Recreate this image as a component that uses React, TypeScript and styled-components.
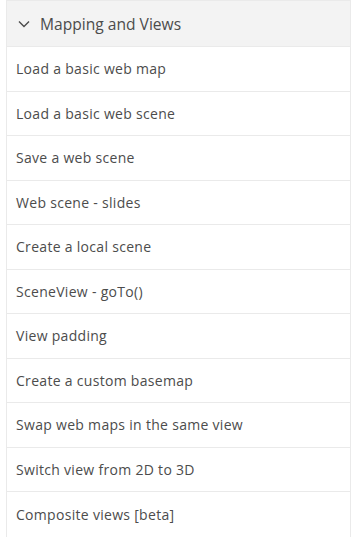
import { FC } from "react";
import styled, { createGlobalStyle } from "styled-components";

const GlobalStyle = createGlobalStyle`
  body {
    margin: 0;
    background: #ffffff;
    font-family: "Open Sans", Lato, sans-serif;
  }
`;

const items = [
  "Load a basic web map",
  "Load a basic web scene",
  "Save a web scene",
  "Web scene - slides",
  "Create a local scene",
  "SceneView - goTo()",
  "View padding",
  "Create a custom basemap",
  "Swap web maps in the same view",
  "Switch view from 2D to 3D",
  "Composite views [beta]",
];

const Panel = styled.section`
  margin-left: 6px;
  width: 345px;
  border: 1px solid #eaeaea;
  box-sizing: border-box;
`;

const Header = styled.div`
  display: flex;
  align-items: center;
  gap: 9px;
  height: 46px;
  padding-left: 10px;
  background: #f3f3f3;
  color: #4c4c4c;
  font-size: 15.6px;
  border-bottom: 1px solid #eaeaea;
  box-sizing: border-box;
`;

const List = styled.ul`
  list-style: none;
  margin: 0;
  padding: 0;
`;

const Item = styled.li`
  display: flex;
  align-items: center;
  height: 44.5px;
  padding-left: 9px;
  color: #4c4c4c;
  font-size: 14px;
  letter-spacing: 0.3px;
  border-bottom: 1px solid #eaeaea;
  box-sizing: border-box;
  &:last-child {
    border-bottom: none;
  }
`;

const Chevron: FC = () => (
  <svg width="14" height="14" viewBox="0 0 14 14" aria-hidden="true">
    <path d="M2 4.5 L7 9.5 L12 4.5" fill="none" stroke="#4c4c4c" strokeWidth="1.4" />
  </svg>
);

export default function App() {
  return (
    <>
      <GlobalStyle />
      <Panel>
        <Header>
          <Chevron />
          Mapping and Views
        </Header>
        <List>
          {items.map((label) => (
            <Item key={label}>{label}</Item>
          ))}
        </List>
      </Panel>
    </>
  );
}
